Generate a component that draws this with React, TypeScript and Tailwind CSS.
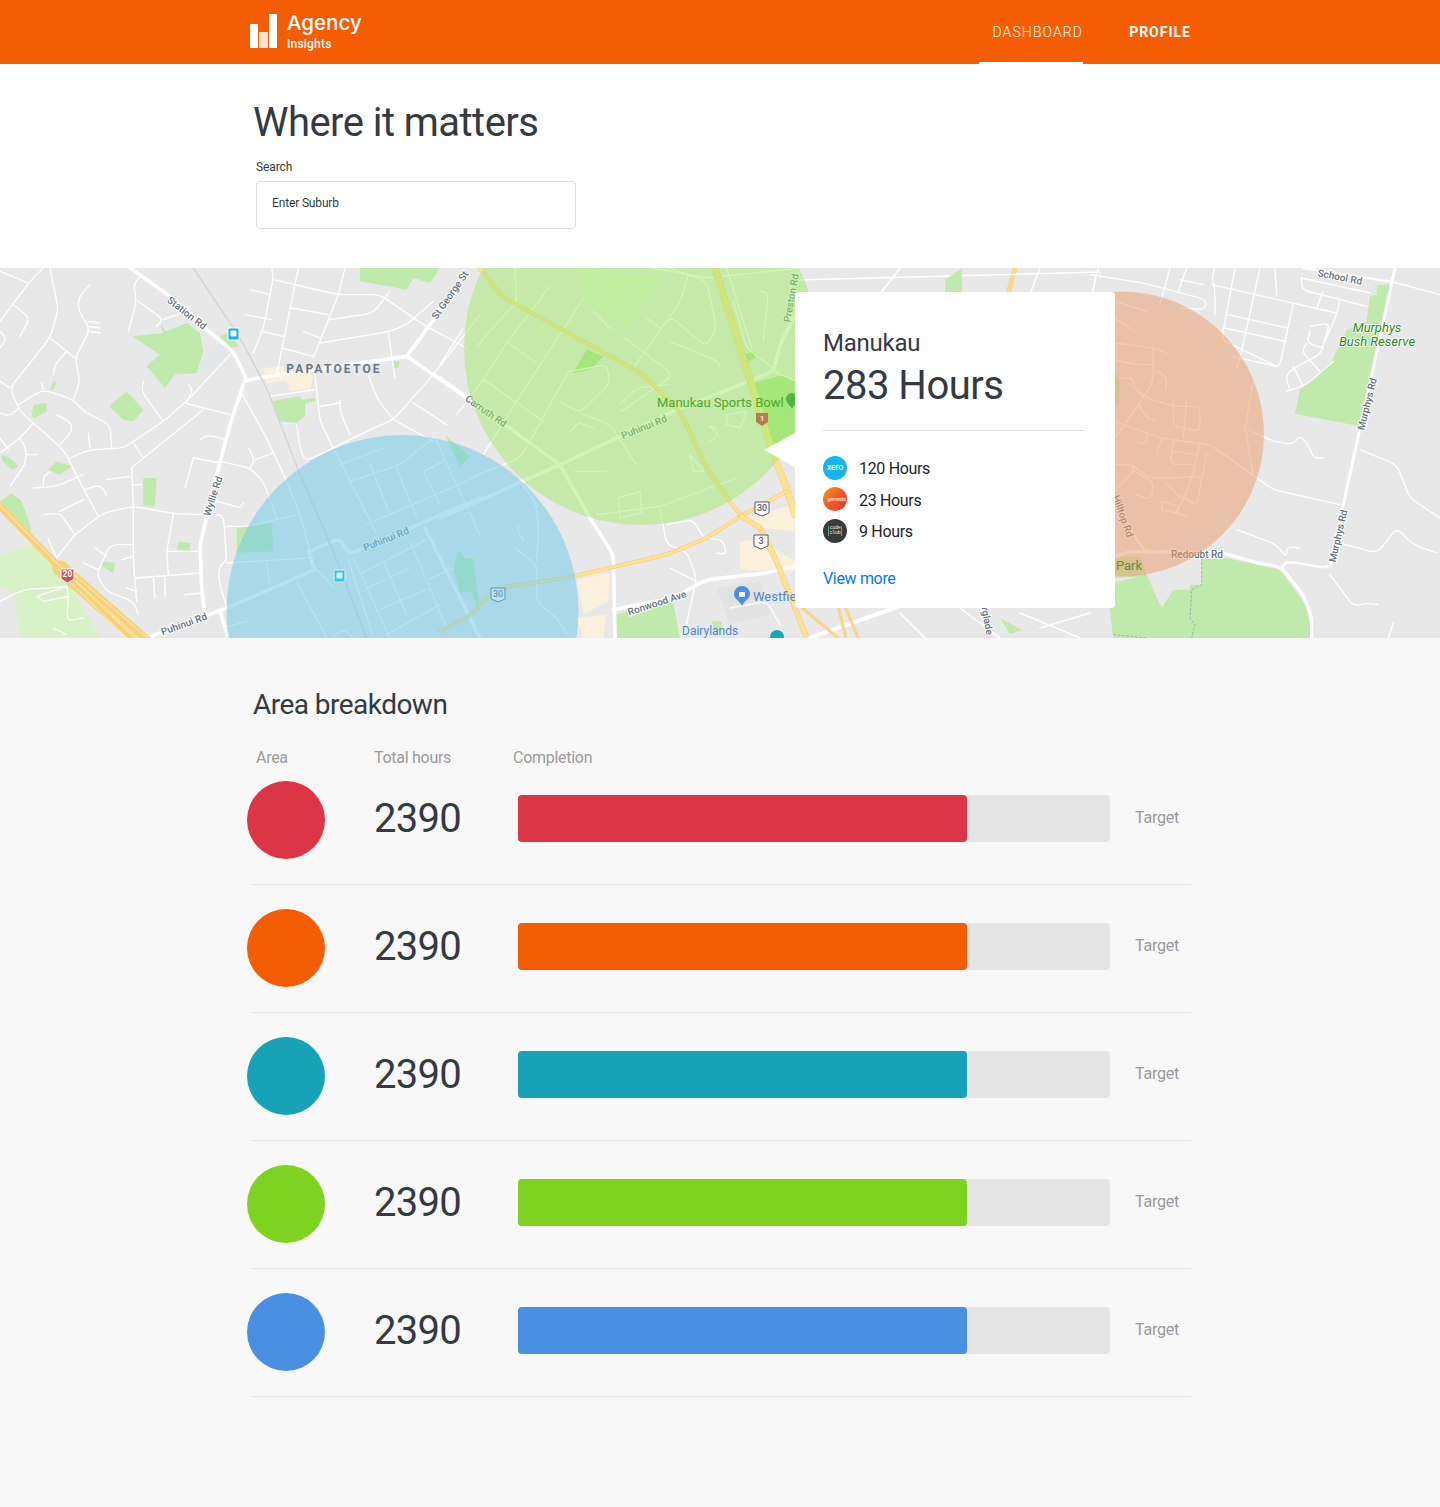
import React from "react";

const W = "#ffffff";

const leftParks = [
  "M395,205 L490,195 L480,170 L500,190 L560,165 L600,195 L610,250 L590,315 L525,320 L495,360 L440,295 L480,260 Z",
  "M660,205 L690,190 L715,235 L690,240 Z",
  "M380,370 L430,425 L400,460 L370,455 L328,415 Z",
  "M815,400 L900,385 L905,395 L945,390 L945,400 L915,405 L915,445 L890,465 L840,460 Z",
  "M430,630 L470,630 L465,715 L430,715 Z",
  "M160,338 L170,340 L160,365 L150,365 Z",
  "M100,410 L140,405 L140,430 L105,450 L95,445 Z",
  "M170,580 L215,595 L180,620 L145,605 Z",
  "M5,560 L30,570 L55,595 L35,605 L5,575 Z",
  "M535,820 L570,825 L570,850 L530,845 Z",
  "M310,880 L345,885 L340,915 L305,895 Z",
  "M35,675 L65,700 L90,770 L95,795 L0,700 Z",
  "M710,780 L815,765 L820,850 L710,855 Z",
  "M1335,500 L1410,565 L1380,600 Z",
  "M1375,850 L1395,870 L1420,870 L1440,1030 L1410,970 L1380,975 L1360,900 Z",
  "M1080,0 L1320,0 L1290,45 L1240,30 L1220,65 L1080,40 Z",
  "M1180,280 L1200,280 L1195,300 L1180,300 Z",
];

const leftMajor = [
  "M390,0 L510,85 L620,185 L700,250 L740,335",
  "M735,340 L770,330 L1220,265",
  "M1220,265 L1400,20",
  "M1220,265 L1400,390 L1440,420",
  "M730,350 L690,470 L650,620 L610,790 L600,830 L605,960 L615,1040",
  "M440,1110 L680,1020 L945,905",
  "M930,850 L1020,810 L1045,860 L1440,690",
  "M925,850 L945,905",
  "M1275,780 L1440,1110",
  "M660,1030 L685,1110",
];

const leftMinor = [
  "M150,0 L175,125 L150,210 L30,360 L60,430 L190,545 L260,680 L295,745",
  "M0,340 L30,360",
  "M55,410 L130,365 L220,395 L250,430 L330,470 L335,540",
  "M210,570 L270,545 L370,540 L490,460 L560,400 L690,260",
  "M555,405 L690,440",
  "M400,525 L430,570",
  "M395,600 L430,570 L610,425",
  "M395,600 L400,715 L400,880 L410,1000",
  "M170,870 L225,800 L310,735 L400,715 L530,738 L670,740 L680,880 L660,890 L655,930 L680,1020",
  "M725,375 L800,510 L860,640 L900,740 L945,905",
  "M660,580 L750,600 L790,640 L830,750",
  "M580,570 L555,660",
  "M580,570 L660,585",
  "M600,515 L625,500 L675,515",
  "M745,540 L765,575 L750,600",
  "M765,575 L820,555",
  "M890,470 L900,540 L915,580 L1000,540 L1100,490 L1180,455 L1300,320 L1440,140",
  "M815,0 L820,30 L790,180 L760,255",
  "M820,35 L1015,80 L1140,80 L1270,170 L1400,240",
  "M895,0 L885,50 L830,320",
  "M1035,0 L1015,80 L940,270",
  "M750,65 L810,80",
  "M735,140 L815,155",
  "M785,190 L850,205",
  "M845,240 L940,265",
  "M875,120 L985,140",
  "M990,155 L1120,135 L1170,70",
  "M960,225 L1170,190 L1220,170 L1300,100",
  "M910,190 L960,210",
  "M945,320 L960,460 L1000,540 L1130,800",
  "M1165,195 L1185,330",
  "M1105,320 L1130,390 L1180,455 L1300,520",
  "M1240,405 L1340,470",
  "M1020,395 L1020,430 L1050,500",
  "M960,415 L1020,405",
  "M810,385 L945,365",
  "M0,160 L90,40 L130,0",
  "M40,110 L90,150 L60,205",
  "M0,190 L20,210 L0,240",
  "M0,10 L85,45",
  "M270,50 L235,90 L235,125 L270,185 L225,270 L240,340 L220,395",
  "M150,210 L200,250 L225,270",
  "M265,160 L300,165",
  "M265,175 L300,180",
  "M270,190 L300,195",
  "M420,25 L400,50 L410,100 L385,190",
  "M415,100 L490,155 L470,175",
  "M490,155 L560,130",
  "M160,320 L165,290 L200,250",
  "M430,340 L425,370 L490,460",
  "M565,350 L580,370 L555,405",
  "M125,345 L130,365",
  "M0,555 L60,510 L100,465",
  "M60,510 L80,545 L75,590 L30,655",
  "M80,560 L110,560",
  "M0,510 L25,545",
  "M0,435 L30,445 L55,420",
  "M265,495 L270,540",
  "M170,440 L215,465 L215,490 L180,530",
  "M255,665 L300,650 L320,680",
  "M320,635 L390,625",
  "M100,660 L170,655 L250,620",
  "M130,660 L130,625 L150,612",
  "M130,740 L180,735 L225,800",
  "M180,730 L250,695",
  "M400,650 L425,650",
  "M500,850 L520,740",
  "M500,850 L505,920",
  "M410,930 L600,915",
  "M500,850 L600,850",
  "M400,830 L330,830 L290,920 L320,970 L400,1000 L415,1040",
  "M285,840 L320,865",
  "M250,885 L295,905",
  "M365,875 L400,865",
  "M460,930 L465,990",
  "M495,925 L495,985",
  "M555,980 L605,975",
  "M380,960 L410,970",
  "M145,815 L170,870",
  "M650,700 L690,710 L720,720 L730,705",
  "M0,1000 L70,965 L150,960 L200,955",
  "M110,985 L200,955 L205,985 L130,1000 Z",
  "M205,990 L200,1060 L250,1050",
  "M160,1080 L200,1100",
  "M1020,590 L1150,540",
  "M1050,640 L1200,590 L1300,510",
  "M1100,770 L1365,655 L1440,620",
  "M1110,590 L1170,740",
  "M1190,600 L1250,750",
  "M1270,610 L1320,710",
  "M1270,610 L1330,580",
  "M1305,510 L1370,650 L1440,800",
  "M1060,870 L1170,1110",
  "M1075,920 L1280,815",
  "M1100,960 L1230,900",
  "M1125,1030 L1290,960",
  "M1150,880 L1220,1040",
  "M1230,820 L1340,1080",
  "M1285,935 L1360,900",
  "M1160,1100 L1320,1010",
  "M1040,860 L1120,1110",
  "M800,890 L810,950",
  "M680,885 L930,870",
  "M680,775 L745,775 L890,740",
  "M890,940 L980,1110",
  "M685,1075 L740,1060",
  "M950,905 L980,935 L1000,960",
  "M1000,1110 L1030,1080 L1060,1110",
];

const midMinor = [
  "M70,180 L0,290",
  "M330,55 L200,225 L130,335 L50,440",
  "M130,335 L310,460",
  "M205,225 L290,285",
  "M110,235 L230,100 L225,0",
  "M430,90 L230,400 L130,560",
  "M460,130 L515,185",
  "M555,210 L700,320 L545,430",
  "M580,300 L690,145 L800,235 L830,180 L800,40 L690,0",
  "M690,145 L720,105 L745,20",
  "M620,150 L660,180",
  "M690,220 L835,280 L840,300",
  "M390,310 L500,290 L510,345 L420,435 L360,400",
  "M420,435 L510,470 L590,590",
  "M415,465 L390,490",
  "M415,465 L460,480",
  "M540,410 L590,360 L690,350",
  "M385,310 L270,520 L240,570 L90,630",
  "M880,100 L920,240 L1010,310",
  "M1000,310 L1070,340",
  "M1080,0 L800,30 L640,0",
  "M960,70 L985,75 L970,220",
  "M860,0 L935,240",
  "M660,720 L680,830 L740,850 L770,930 L730,1110",
  "M680,770 L760,755 L790,810 L850,815 L860,860 L830,855",
  "M690,900 L770,940",
  "M535,690 L600,670 L605,735 L540,750 Z",
  "M240,640 L290,710 L295,800 L290,880",
  "M240,770 L230,780 L250,820",
  "M225,840 L290,890 L290,1000 L360,1060 L380,1100",
  "M405,610 L500,610",
  "M750,560 L790,610 L760,610 Z",
  "M830,480 L800,470 L840,500 L810,520",
  "M860,440 L920,430 L900,480 L860,470 Z",
  "M470,740 L660,715 L890,630",
  "M870,1020 L980,1000 L1020,1070",
];

const rightMinor = [
  "M75,460 L210,510 L360,530 L550,665 L750,710",
  "M0,20 L160,45 L350,95 L345,125 L270,120",
  "M240,0 L210,110",
  "M290,0 L265,70",
  "M270,35 L340,50",
  "M375,0 L365,30 L375,60 L375,140",
  "M435,0 L395,215 L560,295 L570,290 L610,105",
  "M510,0 L450,270 L440,300",
  "M365,50 L740,135",
  "M555,0 L560,85",
  "M415,140 L590,180",
  "M405,180 L585,220",
  "M425,265 L560,295",
  "M635,30 L840,75",
  "M635,30 L635,65 L830,115",
  "M700,70 L680,120",
  "M750,95 L740,140 L700,230 L690,260 L630,290 L585,320 L600,365",
  "M660,175 L720,165 L700,230",
  "M660,190 L650,225 L700,240",
  "M650,225 L635,250 L690,310",
  "M610,295 L640,355",
  "M590,370 L650,350 L730,280",
  "M75,225 L190,240 L230,255",
  "M190,230 L190,340 L145,410 L75,510",
  "M200,310 L230,325 L228,365",
  "M75,275 L140,290 L190,290",
  "M95,330 L130,330 L130,360 L170,390 L250,415 L330,415 L330,490 L250,475 L250,395",
  "M290,395 L280,510",
  "M145,410 L170,450 L200,460",
  "M175,500 L160,530 L140,520",
  "M215,510 L200,560",
  "M250,520 L240,590 L310,590",
  "M250,550 L320,560",
  "M330,530 L305,630 L290,670 L260,735",
  "M350,555 L320,715 L270,680",
  "M75,590 L125,590 L180,630 L260,630 L300,625 L330,630",
  "M125,590 L130,610 L190,640 L185,695 L135,680",
  "M130,610 L75,670",
  "M225,640 L270,690",
  "M215,700 L265,715 L260,735 L215,725 Z",
  "M260,735 L290,745",
  "M465,480 L490,340",
  "M465,480 L490,620",
  "M465,480 L550,520 L610,530 L630,500 L660,540 L670,570 L700,570",
  "M75,100 L170,130",
  "M75,150 L140,195",
  "M440,785 L560,830 L590,870 L590,835 L630,840",
  "M750,825 L860,855 L890,820 L920,780 L970,830 L1040,855",
  "M810,545 L920,590 L960,690 L1050,750",
  "M720,920 L790,1015 L830,1005 L865,1010",
  "M910,1065 L895,1110",
];

// rounds the corners of a polyline so the roads read as curves
function smooth(d: string, radius = 22) {
  const closed = d.trim().endsWith("Z");
  const pts = d
    .replace(/[MLZ]/g, " ")
    .trim()
    .split(/\s+/)
    .map((s) => s.split(",").map(Number));
  if (pts.length < 3 || closed) return d;
  let out = `M${pts[0][0]},${pts[0][1]}`;
  for (let i = 1; i < pts.length - 1; i++) {
    const [x, y] = pts[i];
    const [ax, ay] = pts[i - 1];
    const [bx, by] = pts[i + 1];
    const la = Math.hypot(ax - x, ay - y);
    const lb = Math.hypot(bx - x, by - y);
    const ra = Math.min(radius, la / 2) / la;
    const rb = Math.min(radius, lb / 2) / lb;
    out += ` L${x + (ax - x) * ra},${y + (ay - y) * ra} Q${x},${y} ${x + (bx - x) * rb},${y + (by - y) * rb}`;
  }
  const e = pts[pts.length - 1];
  return `${out} L${e[0]},${e[1]}`;
}

function Paths({ d, w, color = W }: { d: string[]; w: number; color?: string }) {
  return (
    <g fill="none" stroke={color} strokeWidth={w} strokeLinejoin="round" strokeLinecap="round">
      {d.map((p) => (
        <path key={p} d={smooth(p)} />
      ))}
    </g>
  );
}

function Yellow({ d, w }: { d: string; w: number }) {
  return (
    <>
      <Paths d={[d]} w={w + 3} color="#f2cb74" />
      <Paths d={[d]} w={w} color="#fde293" />
    </>
  );
}

function Label({ x, y, r = 0, t, size = 10 }: { x: number; y: number; r?: number; t: string; size?: number }) {
  return (
    <text
      x={x}
      y={y}
      transform={`rotate(${r} ${x} ${y})`}
      textAnchor="middle"
      dominantBaseline="central"
      fontFamily="Roboto, sans-serif"
      fontSize={size}
      fontWeight={500}
      fill="#66727d"
      stroke="#ffffff"
      strokeWidth={2}
      paintOrder="stroke"
    >
      {t}
    </text>
  );
}

function Shield({ x, y, t }: { x: number; y: number; t: string }) {
  return (
    <g>
      <path
        d={`M${x - 7},${y - 7} h14 v11 l-7,3 l-7,-3 Z`}
        fill="#ffffff"
        stroke="#555c63"
        strokeWidth={1}
        strokeLinejoin="round"
      />
      <text x={x} y={y - 1} textAnchor="middle" dominantBaseline="central" fontFamily="Roboto, sans-serif" fontSize={9} fontWeight={500} fill="#555c63">
        {t}
      </text>
    </g>
  );
}

function MapDrawing() {
  return (
    <svg viewBox="0 0 1440 370" className="block h-full w-full">
      <rect width={1440} height={370} fill="#e8e8e8" />

      {/* left third, drawn in 3x units */}
      <g transform="scale(0.33333)">
        <path d="M0,860 L100,830 L180,900 L300,1110 L60,1110 L40,970 L0,960 Z" fill="#d6f2c6" />
        <path d="M790,300 L850,295 L850,310 L940,320 L930,365 L870,370 L860,340 L800,345 Z" fill="#fbf0dc" />
        <path d="M590,290 L690,210 L690,260 L600,320 Z" fill="#e3e8ec" />
        {leftParks.map((p) => (
          <path key={p} d={p} fill="#bfeaac" />
        ))}
        <Paths d={leftMinor} w={4} />
        <Paths d={leftMajor} w={11} />
        <Paths d={["M580,0 L720,210 L800,360 L900,620 L1000,850 L1100,1110"]} w={5} color="#d6d6d6" />
        <Paths d={["M0,715 L180,900"]} w={22} color="#f7d27a" />
        <Paths d={["M180,900 L440,1130"]} w={46} color="#f7d27a" />
        <Paths d={["M0,712 L180,895 L430,1125", "M180,912 L395,1125", "M205,905 L460,1125", "M190,905 L420,1125"]} w={3} color="#fdeebb" />
      </g>

      {/* middle, drawn in 3x units */}
      <g transform="translate(440 0) scale(0.33333)">
        <path d="M415,0 L670,30 L560,180 L430,90 Z" fill="#e2f3d6" />
        <path d="M440,245 L490,265 L450,305 L398,315 Z" fill="#a4e58c" />
        <path d="M905,260 L945,250 L945,270 L915,285 Z" fill="#a4e58c" />
        <path d="M940,345 L1030,320 L1070,340 L1065,520 L1000,560 Z" fill="#a8e68a" />
        <path d="M410,935 L510,915 L505,1000 L430,1040 Z" fill="#fbf0dc" />
        <path d="M410,1050 L500,1040 L490,1110 L430,1110 Z" fill="#fbf0dc" />
        <path d="M920,750 L1060,710 L1065,790 L960,780 Z" fill="#fbf0dc" />
        <path d="M900,820 L960,815 L1065,880 L1065,910 L900,905 Z" fill="#fbf0dc" />
        <path d="M830,960 L960,940 L990,1040 L870,1070 Z" fill="#e2e2e2" />
        <path d="M520,1040 L700,1005 L720,1110 L520,1110 Z" fill="#bfeaac" />
        <path d="M815,1060 L845,1060 L845,1090 L825,1090 Z" fill="#bfeaac" />
        <Paths d={midMinor} w={4} />
        <Paths d={["M0,330 L360,590 L450,750 L520,860 L525,1110", "M0,750 L360,590 L700,430 L1000,310 L1020,230 L1060,150", "M520,1025 L700,990 L800,935 L980,915 L1065,895"]} w={11} />
        <Yellow d="M120,0 L185,85 L610,320 L720,430 L800,600 L880,715 L905,745" w={9} />
        <Yellow d="M825,0 L900,240 L1000,560 L1040,660 L1065,740" w={18} />
        <Yellow d="M960,780 L1010,880 L1100,1110" w={13} />
        <Yellow d="M1040,670 L900,745 L800,810 L680,860 L400,925 L280,945 L170,960 L80,1050 L0,1090" w={9} />
        <Yellow d="M905,745 L960,780" w={13} />
      </g>

      {/* top and bottom slivers beside the card */}
      <g fill="none" strokeLinecap="round">
        <path d="M1015,0 L1008,26" stroke="#f7d98a" strokeWidth={5} />
        <path d="M795,12 L1100,4" stroke="#ffffff" strokeWidth={1.5} />
        <path d="M900,0 L880,26 M1040,0 L1030,26 M1098,0 L1092,26" stroke="#ffffff" strokeWidth={1.5} />
        <path d="M945,12 L962,0 L962,26 L945,26 Z" fill="#bfeaac" stroke="none" />
        <path d="M810,370 L900,338" stroke="#ffffff" strokeWidth={4} />
        <path d="M800,338 L838,370 M845,338 L858,370 M838,338 L846,370" stroke="#f8d684" strokeWidth={3} />
        <path d="M900,345 L925,370 M960,340 L1000,370 M1020,345 L1080,370 M1040,360 L1090,345" stroke="#ffffff" strokeWidth={1.5} />
        <path d="M1000,350 L1010,366 L1022,362 Z" fill="#bfeaac" stroke="none" />
      </g>

      {/* right side, drawn in 3x units */}
      <g transform="translate(1090 0) scale(0.33333)">
        <path d="M860,50 L900,50 L810,475 L615,437 L630,365 L725,280 L770,185 L830,160 L840,85 L860,80 Z" fill="#bfeaac" />
        <path d="M300,950 L335,950 L335,870 L410,870 L570,905 L660,1030 L660,1110 L70,1110 L50,950 L170,920 L215,1020 L250,965 L300,965 Z" fill="#bfeaac" />
        <path d="M75,870 L150,865 L170,925 L75,930 Z" fill="#bfeaac" />
        <path d="M75,310 L90,350 L85,410 L75,410 Z" fill="#bfeaac" />
        <Paths d={rightMinor} w={4} />
        <Paths d={["M915,0 L760,710 L720,890"]} w={9} />
        <Paths d={["M640,0 L910,42"]} w={7} />
        <Paths d={["M910,42 L1050,80"]} w={4} />
        <Paths d={["M75,865 L120,850 L400,855 L500,885 L570,895 L640,980 L665,1050 L665,1110"]} w={10} />
        <Paths d={["M70,680 L130,800 L170,855"]} w={8} />
        <Paths d={["M575,900 L590,880 L710,900 L725,885"]} w={8} />
        <path
          d="M335,870 L335,950 L305,965 L300,1050 L315,1070 L305,1110 M70,1100 L170,1110"
          fill="none"
          stroke="#86bfa4"
          strokeWidth={3}
          strokeDasharray="8 5"
        />
      </g>

      {/* road labels */}
      <Label x={187} y={45} r={38} t="Station Rd" />
      <Label x={450} y={27} r={-55} t="St George St" />
      <Label x={486} y={143} r={35} t="Carruth Rd" />
      <Label x={644} y={159} r={-22} t="Puhinui Rd" />
      <Label x={791} y={30} r={-80} t="Preston Rd" />
      <Label x={213} y={228} r={-72} t="Wyllie Rd" />
      <Label x={386} y={271} r={-22} t="Puhinui Rd" />
      <Label x={184} y={356} r={-20} t="Puhinui Rd" />
      <Label x={657} y={335} r={-18} t="Ronwood Ave" />
      <Label x={1123} y={248} r={70} t="Hilltop Rd" />
      <Label x={1197} y={286} t="Redoubt Rd" />
      <Label x={1367} y={136} r={-76} t="Murphys Rd" />
      <Label x={1338} y={268} r={-77} t="Murphys Rd" />
      <Label x={1340} y={9} r={11} t="School Rd" />
      <Label x={986} y={345} r={80} t="Everglade" />

      <text x={334} y={101} textAnchor="middle" dominantBaseline="central" fontFamily="Roboto, sans-serif" fontSize={12} fontWeight={700} letterSpacing={2.2} fill="#6b7888">
        PAPATOETOE
      </text>

      <Shield x={498} y={327} t="30" />
      <Shield x={762} y={241} t="30" />
      <Shield x={761} y={274} t="3" />

      {/* tinted circles */}
      <circle cx={641} cy={80} r={177} fill="#a2ea68" fillOpacity={0.5} />
      <circle cx={402.5} cy={343} r={176} fill="#74ccea" fillOpacity={0.55} />
      <circle cx={1121.5} cy={166} r={142.5} fill="#e8a072" fillOpacity={0.55} />

      {/* markers and place names over the circles */}
      <g>
        <rect x={228} y={60} width={11} height={12} rx={1.5} fill="#0fb4f5" stroke="#ffffff" />
        <rect x={230.5} y={62.5} width={6} height={6} rx={1} fill="#ffffff" />
      </g>
      <g>
        <rect x={334} y={302} width={11} height={12} rx={1.5} fill="#3cc0ee" stroke="#d8f2fb" />
        <rect x={336.5} y={304.5} width={6} height={6} rx={1} fill="#d8f2fb" />
      </g>
      <g>
        <path d="M61,301 h13 v10 l-6.5,4 l-6.5,-4 Z" fill="#d84f4f" stroke="#ffffff" />
        <text x={67.5} y={306} textAnchor="middle" dominantBaseline="central" fontFamily="Roboto, sans-serif" fontSize={8.5} fontWeight={700} fill="#ffffff">
          20
        </text>
      </g>
      <g>
        <path d="M756,145 h12 v9 l-6,4 l-6,-4 Z" fill="#b07f4d" />
        <text x={762} y={150.5} textAnchor="middle" dominantBaseline="central" fontFamily="Roboto, sans-serif" fontSize={8} fontWeight={700} fill="#f1e5d4">
          1
        </text>
      </g>
      <text x={657} y={134} dominantBaseline="central" fontFamily="Roboto, sans-serif" fontSize={13} fill="#4fa82c">
        Manukau Sports Bowl
      </text>
      <path d="M792,125 a6,6 0 0 1 6,6 c0,4 -4,6 -6,10 c-2,-4 -6,-6 -6,-10 a6,6 0 0 1 6,-6 Z" fill="#4fb83a" />
      <path d="M742,318 a8,8 0 0 1 8,8 c0,5 -6,7 -8,12 c-2,-5 -8,-7 -8,-12 a8,8 0 0 1 8,-8 Z" fill="#4a90e2" />
      <rect x={739} y={324} width={6} height={5} rx={1} fill="#ffffff" />
      <text x={753} y={328} dominantBaseline="central" fontFamily="Roboto, sans-serif" fontSize={13} fill="#4a86d0">
        Westfield
      </text>
      <text x={682} y={363} dominantBaseline="central" fontFamily="Roboto, sans-serif" fontSize={12} fill="#4a86d0">
        Dairylands
      </text>
      <circle cx={777} cy={369} r={7} fill="#1aa6b8" />
      <text x={1129} y={297} textAnchor="middle" dominantBaseline="central" fontFamily="Roboto, sans-serif" fontSize={13} fill="#6f8a3c">
        Park
      </text>
      <g fontFamily="Roboto, sans-serif" fontSize={13} fontStyle="italic" fill="#2f8a24" stroke="#ffffff" strokeWidth={1.5} paintOrder="stroke" textAnchor="middle">
        <text x={1377} y={64}>Murphys</text>
        <text x={1377} y={78}>Bush Reserve</text>
      </g>
    </svg>
  );
}

const rows = ["bg-[#dc3545]", "bg-[#f55d05]", "bg-[#17a2b8]", "bg-[#7ed321]", "bg-[#4a90e2]"];

function BrandBadge({ kind }: { kind: "xero" | "genesis" | "code" }) {
  if (kind === "xero") {
    return (
      <span className="mt-[-3px] flex h-6 w-6 items-center justify-center rounded-full bg-[#13b5ea] text-[9px] leading-none text-white">
        xero
      </span>
    );
  }
  if (kind === "genesis") {
    return (
      <span className="mt-[-3px] flex h-6 w-6 items-center justify-center overflow-hidden rounded-full bg-gradient-to-br from-[#f79a1e] via-[#f2592a] to-[#e8302f] pl-[3px] text-[6px] leading-none font-medium text-[#fde0d0]">
        genesis
      </span>
    );
  }
  return (
    <span className="mt-[-3px] flex h-6 w-6 items-center justify-center rounded-full bg-[#3a3a3a]">
      <span className="flex flex-col items-center border-x border-[#3fa9a0] px-[1px] font-['Liberation_Mono',monospace] text-[5px] leading-[5px] text-[#e8e8e8]">
        <span>code</span>
        <span>club</span>
      </span>
    </span>
  );
}

function Card() {
  const items = [
    { kind: "xero" as const, t: "120 Hours" },
    { kind: "genesis" as const, t: "23 Hours" },
    { kind: "code" as const, t: "9 Hours" },
  ];
  return (
    <div className="absolute top-[24px] left-[795px] h-[316px] w-[320px] rounded bg-white pt-[37px] pr-[30px] pl-[28px]">
      <div className="absolute top-[141px] left-[-31px] h-0 w-0 border-y-[17.5px] border-r-[31px] border-y-transparent border-r-white" />
      <div className="text-[24px] leading-[28px] tracking-[-0.25px] text-[#343a40]">Manukau</div>
      <div className="mt-[5px] text-[40px] leading-[48px] tracking-[-0.5px] text-[#343a40]">283 Hours</div>
      <div className="mt-[20px] border-t border-[#e2e2e2]" />
      <div className="mt-[26px] flex flex-col gap-[7.5px]">
        {items.map((i) => (
          <div key={i.t} className="flex h-6 items-center gap-3 text-[16px] tracking-[-0.33px] text-[#212529]">
            <BrandBadge kind={i.kind} />
            <span>{i.t}</span>
          </div>
        ))}
      </div>
      <a className="mt-[23px] block text-[16px] leading-[24px] tracking-[-0.33px] text-[#007bff]">View more</a>
    </div>
  );
}

export default function App() {
  return (
    <div className="font-['Roboto',sans-serif] text-[#343a40]">
      <header className="flex h-16 items-center bg-[#f55d05] pr-[249px] pl-[250px] text-white">
        <div className="flex items-center gap-[10px]">
          <svg width="27" height="34" viewBox="0 0 27 34" className="mt-[-2px] block">
            <rect x="0" y="10" width="8" height="24" fill="#ffffff" />
            <rect x="9" y="18" width="9" height="16" fill="#fde3d3" />
            <rect x="19" y="0" width="8" height="34" fill="#ffffff" />
          </svg>
          <div className="mt-[-2px] flex flex-col">
            <span className="font-['Inter',sans-serif] text-[20.5px] leading-[24px] font-medium">Agency</span>
            <span className="mt-[1px] text-[12px] leading-[16px] font-medium tracking-[0.2px]">Insights</span>
          </div>
        </div>
        <nav className="ml-auto flex h-full items-stretch text-[14px]">
          <a className="flex items-center border-b-2 border-white pt-[3px] pl-[13px] font-light tracking-[1.1px]">DASHBOARD</a>
          <a className="ml-[46px] flex items-center border-b-2 border-transparent pt-[3px] font-bold tracking-[1px]">PROFILE</a>
        </nav>
      </header>

      <section className="h-[204px] bg-white pt-[35px] pl-[253px]">
        <h1 className="text-[40px] leading-[48px] tracking-[-0.55px]">Where it matters</h1>
        <label className="mt-[9px] ml-[3px] block text-[12px] leading-[22px] tracking-[-0.1px] text-[#343a40]">Search</label>
        <div className="mt-[3px] ml-[3px] h-12 w-[320px] rounded border border-[#dcdcdc] pt-[10px] pl-[15px] text-[12px] leading-[22px] tracking-[-0.15px]">
          Enter Suburb
        </div>
      </section>

      <section className="relative h-[370px] overflow-hidden">
        <MapDrawing />
        <Card />
      </section>

      <section className="bg-[#f8f8f8] pt-[50px] pb-[110px]">
        <div className="ml-[252px] w-[939px]">
          <h2 className="ml-[1px] text-[28px] leading-[34px] tracking-[-0.53px]">Area breakdown</h2>
          <div className="mt-[24px] flex text-[16px] leading-[24px] tracking-[-0.28px] text-[#9b9b9b]">
            <span className="ml-[4px] w-[118px]">Area</span>
            <span className="w-[139px]">Total hours</span>
            <span>Completion</span>
          </div>
          <div className="mt-[11px]">
            {rows.map((c, i) => (
              <div key={c} className={`flex border-b border-[#e5e5e5] pb-[25px] ${i > 0 ? "mt-[24px]" : ""}`}>
                <div className={`ml-[-5px] h-[78px] w-[78px] shrink-0 rounded-full ${c}`} />
                <div className="ml-[49px] w-[144px] shrink-0 pt-[14px] text-[40px] leading-[48px] tracking-[-0.75px]">2390</div>
                <div className="mt-[14px] h-[47px] w-[592px] shrink-0 rounded-sm bg-[#e5e5e5]">
                  <div className={`h-full w-[449px] rounded-sm ${c}`} />
                </div>
                <div className="ml-[25px] pt-[25px] text-[16px] leading-[24px] tracking-[-0.2px] text-[#9b9b9b]">Target</div>
              </div>
            ))}
          </div>
        </div>
      </section>
    </div>
  );
}
